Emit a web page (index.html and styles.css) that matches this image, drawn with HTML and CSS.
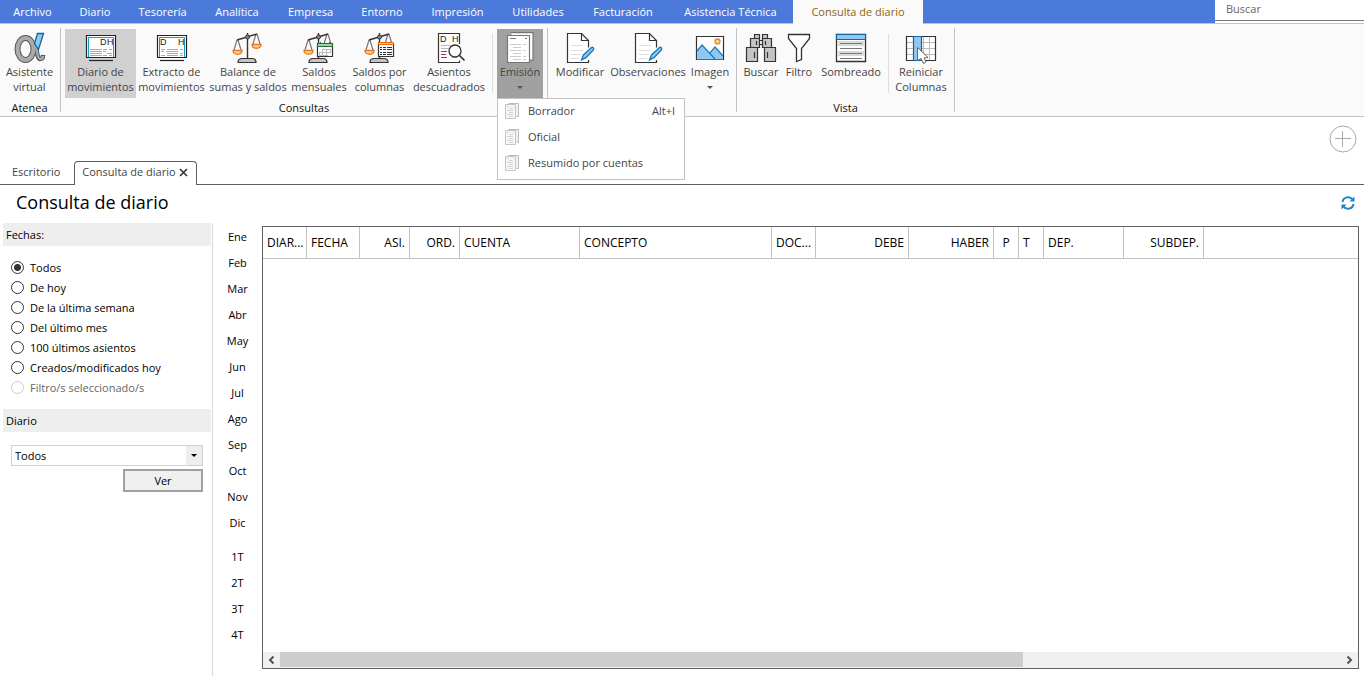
FILE: index.html
```html
<!DOCTYPE html>
<html lang="es">
<head>
<meta charset="utf-8">
<title>Consulta de diario</title>
<link rel="stylesheet" href="styles.css">
</head>
<body>
<svg class="defs" aria-hidden="true">
  <symbol id="scales" viewBox="0 0 32 33">
    <path d="M5 8L2 18M6 8l3 10M24 2l-3 10M25 2l3 10" fill="none" stroke="#777" stroke-width="1.2"/>
    <path d="M5 8L25 2" stroke="#333" stroke-width="1.4"/>
    <path d="M15.500 1v26" stroke="#333" stroke-width="1.4"/>
    <circle cx="15.500" cy="5" r="2" fill="#888" stroke="#333"/>
    <path d="M1 18.500h9c0 5-9 5-9 0z" fill="#fdd28c" stroke="#e87825" stroke-width="1.3"/>
    <path d="M20 12.500h9c0 5-9 5-9 0z" fill="#fdd28c" stroke="#e87825" stroke-width="1.3"/>
    <path d="M6 30.500c0-3 1-4 4-4h10c3 0 4 1 4 4z" fill="#c4c4c4" stroke="#333" stroke-width="1.2"/>
  </symbol>
  <symbol id="edit-page" viewBox="0 0 32 33">
    <path d="M24.500 28v2.500h-21v-29h14l7 7v7" fill="#fff" stroke="#333" stroke-width="1.2"/>
    <path d="M17.500 1.500v7h7" fill="none" stroke="#333" stroke-width="1.200"/>
    <path d="M7 13.500h12M7 18.500h12M7 22.500h10M7 26.500h8" stroke="#ddd"/>
    <path d="M17.500 28l2-5 8-7.500c1-1 3 1 2 2.200l-7.500 8z" fill="#90c8f2" stroke="#1479bd" stroke-width="1.300"/>
  </symbol>
  <symbol id="report" viewBox="0 0 14 16">
    <path d="M3.500 .5h10v13h-2" fill="#f2f2f2" stroke="#bbb"/>
    <path d="M.5 1.500h10v14h-10z" fill="#f7f7f7" stroke="#c4c4c4"/>
    <path d="M2 3.500h2M8 3.500h1M4 5.500h4M2 7.500h6M4 9.500h4M2 11.500h6M4 13.500h4" stroke="#d4d4d4"/>
  </symbol>
</svg>

<nav class="menubar" aria-label="Principal">
  <a class="menu-item" href="#">Archivo</a>
  <a class="menu-item" href="#">Diario</a>
  <a class="menu-item" href="#">Tesorería</a>
  <a class="menu-item" href="#">Analítica</a>
  <a class="menu-item" href="#">Empresa</a>
  <a class="menu-item" href="#">Entorno</a>
  <a class="menu-item" href="#">Impresión</a>
  <a class="menu-item" href="#">Utilidades</a>
  <a class="menu-item" href="#">Facturación</a>
  <a class="menu-item" href="#">Asistencia Técnica</a>
  <a class="menu-item menu-current" href="#" aria-current="page">Consulta de diario</a>
  <input class="search" type="search" placeholder="Buscar" aria-label="Buscar">
</nav>

<header class="ribbon">
  <section class="group">
    <div class="tools tools-atenea">
      <button class="tool" type="button">
        <svg class="icon" viewBox="0 0 32 33" fill="none">
          <path d="M22 15c1 7 2 12 4 12 2 0 3-1 3-4" stroke="#555" stroke-width="4.500"/>
          <ellipse cx="11.500" cy="17" rx="8" ry="11" stroke="#555" stroke-width="6"/>
          <ellipse cx="11.500" cy="17" rx="8" ry="11" stroke="#aaa" stroke-width="4"/>
          <path d="M22 14c1 8 2 13 4 13 2 0 3-1 3-3" stroke="#aaa" stroke-width="2.500"/>
          <path d="M23.500 1.500h6l-5 16-4-6z" fill="#90c8f2" stroke="#1464a0" stroke-width="1.300"/></svg>
        <span>Asistente<br>virtual</span></button>
    </div>
    <h2 class="group-name">Atenea</h2>
  </section>
  <section class="group">
    <div class="tools tools-consultas">
      <button class="tool tool-on" type="button">
        <svg class="icon" viewBox="0 0 32 33" fill="none"><path d="M1.500 3.500h29v22h-29z" fill="#fff" stroke="#222" stroke-width="1.200"/><path d="M3.500 25V5.500h25V25" stroke="#1b9bd1"/><path d="M4 28.500h24" stroke="#222" stroke-width="1.200"/><path d="M5 17.500h12M5 19.500h12M5 21.500h12M5 23.500h12M18 17.500h4M24 17.500h3M18 19.500h3M22 21.500h5M18 23.500h4M24 23.500h3" stroke="#aaa"/><text class="icon-letter" x="15" y="13">D</text><text class="icon-letter" x="22" y="13">H</text></svg>
        <span>Diario de<br>movimientos</span></button>
      <button class="tool" type="button">
        <svg class="icon" viewBox="0 0 32 33" fill="none"><path d="M1.500 3.500h29v22h-29z" fill="#fff" stroke="#222" stroke-width="1.200"/><path d="M3.500 25V5.500h25V25" stroke="#1b9bd1"/><path d="M4 28.500h24" stroke="#222" stroke-width="1.200"/><path d="M5 17.500h4M11 17.500h11M5 19.500h3M10 19.500h12M11 21.500h11M5 23.500h4M11 23.500h11M24 17.500h3M24 21.500h3M24 23.500h3" stroke="#aaa"/><text class="icon-letter" x="4" y="13">D</text><text class="icon-letter" x="22" y="13">H</text></svg>
        <span>Extracto de<br>movimientos</span></button>
      <button class="tool" type="button">
        <svg class="icon"><use href="#scales"/></svg>
        <span>Balance de<br>sumas y saldos</span></button>
      <button class="tool" type="button">
        <svg class="icon" viewBox="0 0 32 33"><use href="#scales" width="32" height="33"/><path d="M14.500 11.500h15v13h-15z" fill="#fff" stroke="#333" stroke-width="1.200"/><path d="M14.500 11.500h15v3h-15z" fill="#9dd6a5" stroke="#286b39"/><path d="M17.500 10v2M26.500 10v2" stroke="#286b39"/><path d="M19 17.500h9M16 20.500h12M16 23.500h9M16.500 20v4M19.500 17v7M23.500 17v7M27.500 17v4" stroke="#bbb" fill="none"/></svg>
        <span>Saldos<br>mensuales</span></button>
      <button class="tool" type="button">
        <svg class="icon" viewBox="0 0 32 33"><use href="#scales" width="32" height="33"/><path d="M14.500 11.500h15v13h-15z" fill="#fff" stroke="#333" stroke-width="1.200"/><path d="M14.500 10.500h15v2h-15z" fill="#fdc28c" stroke="#e86c18"/><path d="M16 15.500h2M19 15.500h3M23 15.500h5M16 17.500h2M19 17.500h3M23 17.500h5M16 20.500h2M19 20.500h3M23 20.500h5M16 22.500h2M19 22.500h3M23 22.500h5" stroke="#333"/></svg>
        <span>Saldos por<br>columnas</span></button>
      <button class="tool" type="button">
        <svg class="icon" viewBox="0 0 32 33" fill="none"><path d="M26.500 12V1.500h-21v29h21v-2" fill="#fff" stroke="#333" stroke-width="1.200"/><path d="M8 13.500h10M8 16.500h8M19 25.500h5" stroke="#bbb"/><path d="M8 19.500h6M8 22.500h5M8 25.500h6" stroke="#e0203a" stroke-width="1.200"/><circle cx="22" cy="19" r="6" fill="#fff" stroke="#333" stroke-width="1.300"/><path d="M26.500 23.500l5 5" stroke="#333" stroke-width="1.700"/><text class="icon-letter" x="7" y="10">D</text><text class="icon-letter" x="19" y="10">H</text></svg>
        <span>Asientos<br>descuadrados</span></button>
      <i class="divider"></i>
      <div class="drop">
        <button class="tool tool-open" type="button" aria-expanded="true">
          <svg class="icon" viewBox="0 0 32 33" fill="none"><path d="M6.500 .7h22.500v27.500h-4" fill="#fff" stroke="#777" stroke-width="1.200"/><path d="M3.500 3.500h22v27h-22z" fill="#fff" stroke="#777" stroke-width="1.200"/><path d="M6 6.500h6M21 6.500h2" stroke="#777"/><path d="M6 12.500h11M19 12.500h3M9 15.500h8M6 18.500h11M19 18.500h3M9 21.500h8M6 24.500h11M19 24.500h3M9 27.500h8M19 27.500h3" stroke="#ccc"/></svg>
          <span>Emisión</span><i class="caret"></i></button>
        <div class="dropdown">
          <button class="option" type="button"><svg class="option-icon"><use href="#report"/></svg>Borrador<kbd>Alt+I</kbd></button>
          <button class="option" type="button"><svg class="option-icon"><use href="#report"/></svg>Oficial</button>
          <button class="option" type="button"><svg class="option-icon"><use href="#report"/></svg>Resumido por cuentas</button>
        </div>
      </div>
    </div>
    <h2 class="group-name">Consultas</h2>
  </section>
  <section class="group">
    <div class="tools tools-edit">
      <button class="tool" type="button"><svg class="icon"><use href="#edit-page"/></svg><span>Modificar</span></button>
      <button class="tool" type="button"><svg class="icon"><use href="#edit-page"/></svg><span>Observaciones</span></button>
      <button class="tool" type="button">
        <svg class="icon" viewBox="0 0 32 33"><path d="M2.500 4.500h27v23h-27z" fill="#fff" stroke="#333" stroke-width="1.200"/><path d="M3 19l5-6 8 9 5-6 8 8v3H3z" fill="#90c8f2"/><path d="M3 19l5-6 13 14M16 21l5-6 8 9M3 27.500h26" fill="none" stroke="#1479bd" stroke-width="1.200"/><circle cx="23.500" cy="9.500" r="2.500" fill="#fdd28c" stroke="#e88435" stroke-width="1.300"/></svg>
        <span>Imagen</span><i class="caret"></i></button>
    </div>
  </section>
  <section class="group">
    <div class="tools tools-vista">
      <button class="tool" type="button">
        <svg class="icon" viewBox="0 0 32 33" fill="#c4c4c4" stroke="#333" stroke-width="1.200"><path d="M9.500 2.500h5v4h-5zM17.500 2.500h5v4h-5zM5.500 6.500h9v9h-9zM17.500 6.500h9v9h-9zM1.500 15.500h11v14h-11zM19.500 15.500h11v14h-11z"/><path d="M14 8.500h4M14 12.500h4M9.500 20v6M22.500 20v6M11.500 9v4M20.500 9v4"/></svg>
        <span>Buscar</span></button>
      <button class="tool" type="button">
        <svg class="icon" viewBox="0 0 32 33"><path d="M5.500 2.500h21v4l-8 10v11l-5 2v-13l-8-10z" fill="#fff" stroke="#333" stroke-width="1.300"/></svg>
        <span>Filtro</span></button>
      <button class="tool" type="button">
        <svg class="icon" viewBox="0 0 32 33"><path d="M1.500 2.500h29v27h-29z" fill="#fff" stroke="#333" stroke-width="1.300"/><path d="M2 9h28v5H2zM2 19h28v5H2z" fill="#d8ddda"/><path d="M1.500 2.500h29v5h-29z" fill="#90c8f2" stroke="#1464a0" stroke-width="1.200"/><path d="M5 11.500h22M5 16.500h22M5 21.500h22M5 26.500h22" stroke="#777"/></svg>
        <span>Sombreado</span></button>
      <i class="divider"></i>
      <button class="tool" type="button">
        <svg class="icon" viewBox="0 0 32 33"><path d="M1.500 4.500h29v24h-29z" fill="#fff"/><path d="M2 10.500h28M2 16.500h28M2 22.500h28M8.500 5v23M18.500 5v23M24.500 5v23" stroke="#bbb"/><path d="M1.500 4.500h29v24h-29z" fill="none" stroke="#333" stroke-width="1.200"/><path d="M8.500 4.500h8v24h-8z" fill="#90c8f2" stroke="#1464a0" stroke-width="1.200"/><path d="M12.500 15.500v13l3.500-2 2.500 5 2.500-1.500-2-4 4-.5z" fill="#fff" stroke="#666"/></svg>
        <span>Reiniciar<br>Columnas</span></button>
    </div>
    <h2 class="group-name">Vista</h2>
  </section>
</header>

<div class="tabstrip">
  <a class="tab" href="#">Escritorio</a>
  <div class="tab tab-current"><a href="#" aria-current="page">Consulta de diario</a>
    <button class="tab-close" type="button" aria-label="Cerrar"><svg width="9" height="9" viewBox="0 0 9 9"><path d="M1 1l7 7M8 1l-7 7" stroke="#333" stroke-width="1.600"/></svg></button></div>
  <button class="add" type="button" aria-label="Añadir"><svg width="28" height="28" viewBox="0 0 28 28" fill="none" stroke="#aaa"><circle cx="14" cy="14" r="13"/><path d="M6 13.500h16M13.500 6v16"/></svg></button>
</div>

<div class="title-row">
  <h1>Consulta de diario</h1>
  <button class="refresh" type="button" aria-label="Actualizar"><svg width="14" height="14" viewBox="0 0 14 14" fill="none" stroke="#1c85c7" stroke-width="2"><path d="M1.500 6c.8-5.500 7.500-6 10-2.500M12.500 8c-.8 5.500-7.500 6-10 2.500"/><path d="M13.500 .500v5h-5zM.5 13.500v-5h5z" fill="#1c85c7" stroke="none"/></svg></button>
</div>

<main class="workspace">
  <form class="filters">
    <fieldset class="dates">
      <legend class="bar">Fechas:</legend>
      <label class="choice"><input type="radio" name="fechas" checked>Todos</label>
      <label class="choice"><input type="radio" name="fechas">De hoy</label>
      <label class="choice"><input type="radio" name="fechas">De la última semana</label>
      <label class="choice"><input type="radio" name="fechas">Del último mes</label>
      <label class="choice"><input type="radio" name="fechas">100 últimos asientos</label>
      <label class="choice"><input type="radio" name="fechas">Creados/modificados hoy</label>
      <label class="choice choice-off"><input type="radio" name="fechas" disabled>Filtro/s seleccionado/s</label>
    </fieldset>
    <label class="bar" for="diario">Diario</label>
    <div class="picker">
      <span class="select-wrap"><select id="diario"><option>Todos</option></select></span>
      <button class="view" type="button">Ver</button>
    </div>
  </form>
  <div class="periods">
    <button type="button">Ene</button>
    <button type="button">Feb</button>
    <button type="button">Mar</button>
    <button type="button">Abr</button>
    <button type="button">May</button>
    <button type="button">Jun</button>
    <button type="button">Jul</button>
    <button type="button">Ago</button>
    <button type="button">Sep</button>
    <button type="button">Oct</button>
    <button type="button">Nov</button>
    <button type="button">Dic</button>
    <button class="quarter-first" type="button">1T</button>
    <button type="button">2T</button>
    <button type="button">3T</button>
    <button type="button">4T</button>
  </div>
  <div class="ledger">
    <table>
      <colgroup><col class="w44"><col class="w53"><col class="w50"><col class="w50"><col class="w120"><col class="w192"><col class="w44"><col class="w93"><col class="w85"><col class="w25"><col class="w25"><col class="w80"><col class="w80"><col></colgroup>
      <thead><tr><th>DIAR...</th><th>FECHA</th><th class="num">ASI.</th><th class="num">ORD.</th><th>CUENTA</th><th>CONCEPTO</th><th>DOC...</th><th class="num">DEBE</th><th class="num">HABER</th><th class="mid">P</th><th>T</th><th>DEP.</th><th class="num">SUBDEP.</th><th></th></tr></thead>
    </table>
    <div class="scrollbar">
      <button type="button" aria-label="Izquierda"><svg width="7" height="8" viewBox="0 0 7 8"><path d="M5.500 .500L2 4l3.500 3.500" fill="none" stroke="#505050" stroke-width="2"/></svg></button>
      <div class="track"><div class="thumb"></div></div>
      <button type="button" aria-label="Derecha"><svg width="7" height="8" viewBox="0 0 7 8"><path d="M1.500 .500L5 4l-3.500 3.500" fill="none" stroke="#505050" stroke-width="2"/></svg></button>
    </div>
  </div>
</main>
</body>
</html>
```

FILE: styles.css
```css
* { box-sizing: border-box; }

body {
  margin: 0;
  min-height: 100vh;
  display: flex;
  flex-direction: column;
  background: #fff;
  color: #000;
  font: 11px/15px "Open Sans", "Noto Sans", sans-serif;
}

button, input, select { font: inherit; color: inherit; }
button { margin: 0; padding: 0; border: 0; background: none; }
a { color: inherit; text-decoration: none; }
h1, h2 { margin: 0; font-weight: 400; }
.defs { display: none; }

.menubar {
  display: grid;
  grid-template-columns: 65px 60px 75px 74px 73px 70px 81px 80px 90px 125px 130px 1fr 149px;
  height: 24px;
  background: #4c7adb;
  border-bottom: 1px solid #c3c3c3;
  color: #fff;
}
.menu-item { line-height: 23px; text-align: center; white-space: nowrap; }
.menu-current { height: 24px; background: #fafafa; color: #8f6408; }
.search {
  grid-column: 13;
  height: 21px;
  padding: 0 11px 3px;
  border: 0;
  border-bottom: 1px solid #777;
  border-radius: 0;
  background: #fff;
  box-shadow: 0 2px #fff;
  outline: 0;
}
.search::placeholder { color: #666; opacity: 1; }

.ribbon {
  display: flex;
  height: 93px;
  padding-top: 4px;
  background: #fafafa;
  border-bottom: 1px solid #c3c3c3;
  color: #444;
}
.group {
  height: 84px;
  padding: 1px 4px 0;
  border-right: 1px solid #c3c3c3;
}
.group:first-child { padding-left: 0; padding-right: 1px; }
.tools { display: grid; height: 70px; }
.tools-atenea { grid-template-columns: 59px; }
.tools-consultas { grid-template-columns: 71px 71px 82px 60px 61px 78px 9px 46px; }
.tools-edit { grid-template-columns: 56px 80px 44px; }
.tools-vista { grid-template-columns: 40px 36px 68px 7px 58px; }
.tool {
  display: flex;
  flex-direction: column;
  align-items: center;
  width: 100%;
  height: 69px;
  padding-top: 3px;
  white-space: nowrap;
}
.tool span { display: flex; flex-direction: column; }
.tool-on { background: #d0d0d0; }
.tool-open { background: #a0a0a0; }
.icon { display: block; width: 32px; height: 33px; margin-bottom: -1px; flex: none; }
.icon-letter { font: 9px "Liberation Sans", sans-serif; fill: #222; }
.divider { width: 1px; height: 59px; margin: 5px auto 0; background: #ddd; }
.caret {
  margin-top: 7px;
  border: 3px solid transparent;
  border-top-color: #555;
  border-bottom: 0;
}
.group-name { font-size: 11px; line-height: 18px; text-align: center; color: #111; }

.drop { position: relative; }
.dropdown {
  position: absolute;
  top: 69px;
  left: 0;
  z-index: 2;
  width: 188px;
  height: 82px;
  background: #fff;
  border: 1px solid #c3c3c3;
}
.option {
  display: flex;
  align-items: center;
  width: 100%;
  height: 26px;
  padding: 0 9px 3px 7px;
}
.option-icon { width: 14px; height: 16px; margin-right: 9px; }
.option kbd { margin-left: auto; font: inherit; }

.tabstrip {
  display: flex;
  align-items: flex-end;
  height: 68px;
  border-bottom: 1px solid #606060;
  color: #444;
}
.tab { height: 24px; padding: 4px 14px 0 12px; white-space: nowrap; }
.tab-current {
  display: flex;
  margin-bottom: -1px;
  padding: 2px 8px 0 7px;
  background: #fff;
  border: 1px solid #606060;
  border-bottom: 0;
  border-radius: 4px 4px 0 0;
}
.tab-close { height: 17px; margin-left: 3px; }
.tab-close svg, .add svg, .refresh svg { display: block; }
.add { align-self: flex-start; margin: 8px 7px 0 auto; }

.title-row {
  display: flex;
  justify-content: space-between;
  align-items: center;
  height: 38px;
  padding: 0 9px 2px 16px;
}
h1 { font-size: 18px; line-height: 24px; padding-bottom: 2px; }

.workspace {
  flex: 1;
  display: grid;
  grid-template-columns: 213px 49px 1fr;
}
.filters { border-right: 1px solid #d9d9d9; padding-left: 3px; }
.dates { margin: 0; padding: 0 0 12px; border: 0; }
.bar {
  display: block;
  width: 208px;
  padding: 4px 3px;
  background: #eee;
}
legend.bar { margin-bottom: 11px; }
.choice {
  display: flex;
  align-items: center;
  height: 20px;
  padding-left: 8px;
  gap: 6px;
}
.choice input {
  appearance: none;
  width: 13px;
  height: 13px;
  margin: 0;
  border: 1px solid #333;
  border-radius: 50%;
}
.choice input:checked { background: radial-gradient(circle, #333 3px, transparent 4px); }
.choice-off { color: #666; }
.choice input:disabled { border-color: #ccc; }
.picker {
  display: flex;
  flex-direction: column;
  gap: 3px;
  padding: 13px 9px 0 8px;
}
.select-wrap { position: relative; display: flex; }
.select-wrap::after {
  content: "";
  position: absolute;
  right: 6px;
  top: 9px;
  border: 3px solid transparent;
  border-top-color: #000;
  border-bottom: 0;
  pointer-events: none;
}
select {
  appearance: none;
  width: 100%;
  height: 21px;
  padding: 0 3px;
  border: 1px solid #d0d0d0;
  border-radius: 0;
  background: linear-gradient(to left, #eee 16px, #fff 16px);
}
.view {
  align-self: flex-end;
  width: 80px;
  height: 23px;
  border: 2px solid #a0a0a0;
  background: #f0f0f0;
}
.periods { display: flex; flex-direction: column; }
.periods button { height: 26px; }
.periods .quarter-first { margin-top: 8px; }

.ledger {
  display: flex;
  flex-direction: column;
  justify-content: space-between;
  margin: 3px 5px 7px 0;
  border: 1px solid #606060;
}
table { width: 100%; table-layout: fixed; border-collapse: separate; border-spacing: 0; }
th {
  height: 32px;
  padding: 0 4px;
  border-right: 1px solid #c3c3c3;
  border-bottom: 1px solid #c3c3c3;
  font-size: 12px;
  font-weight: 400;
  text-align: left;
  white-space: nowrap;
}
th:last-child { border-right: 0; }
.num { text-align: right; }
.mid { text-align: center; }
.w25 { width: 25px; }
.w44 { width: 44px; }
.w50 { width: 50px; }
.w53 { width: 53px; }
.w80 { width: 80px; }
.w85 { width: 85px; }
.w93 { width: 93px; }
.w120 { width: 120px; }
.w192 { width: 192px; }

.scrollbar { display: flex; height: 16px; padding-bottom: 1px; background: #f0f0f0; }
.scrollbar button { display: flex; align-items: center; justify-content: center; width: 17px; }
.track { flex: 1; }
.thumb { width: 70%; height: 15px; background: #cdcdcd; }
```
